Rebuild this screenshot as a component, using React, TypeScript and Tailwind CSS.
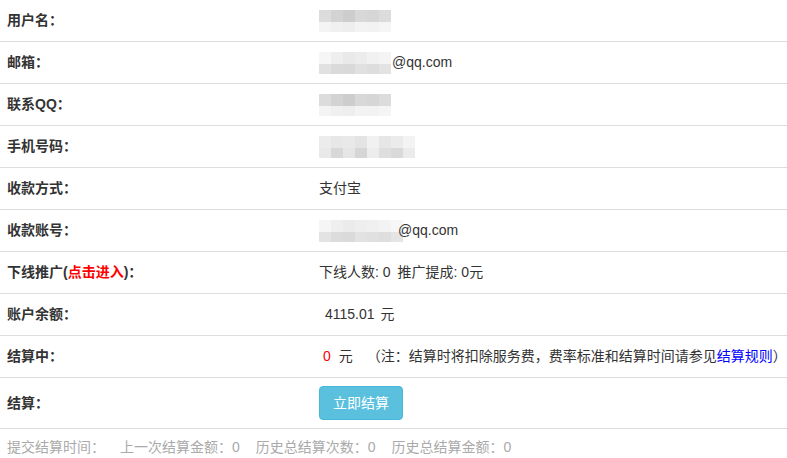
import React from 'react';

const font = { fontFamily: '"Liberation Sans", "Noto Sans CJK SC", sans-serif' };

// blurred placeholder: two rows of pixel cells
function Blur({ top, bottom, cell = 12 }: { top: string[]; bottom: string[]; cell?: number }) {
    return (
        <span className="inline-flex flex-col align-middle">
            <span className="flex h-[12px]">
                {top.map((c, i) => (
                    <span key={i} className="h-full" style={{ width: cell, background: c }} />
                ))}
            </span>
            <span className="flex h-[10px]">
                {bottom.map((c, i) => (
                    <span key={i} className="h-full" style={{ width: cell, background: c }} />
                ))}
            </span>
        </span>
    );
}

const nameTop = ['#dcdcdc', '#d3d3d3', '#cdcdcd', '#d8d8d8', '#d6d6d6', '#dcdcdc'];
const nameBottom = ['#f4f4f4', '#f0f0f0', '#eeeeee', '#f3f3f3', '#f2f2f2', '#f5f5f5'];
const mailTop = ['#f6f6f6', '#eeeeee', '#e9e9e9', '#ececec', '#f1f1f1', '#f4f4f4'];
const mailBottom = ['#e1e1e1', '#dadada', '#d9d9d9', '#e0e0e0', '#dddddd', '#e3e3e3'];
const phoneTop = ['#ececec', '#e7e7e7', '#e9e9e9', '#e4e4e4', '#f1f1f1', '#e6e6e6', '#ebebeb', '#f3f3f3'];
const phoneBottom = ['#e9e9e9', '#d8d8d8', '#e6e6e6', '#d6d6d6', '#ededed', '#dedede', '#d9d9d9', '#ebebeb'];
const acctTop = ['#f5f5f5', '#efefef', '#ebebeb', '#eeeeee', '#f0f0f0', '#f3f3f3', '#f7f7f7'];
const acctBottom = ['#e3e3e3', '#dcdcdc', '#dadada', '#e2e2e2', '#e0e0e0', '#dedede', '#e5e5e5'];

function Row({ label, children, tall }: { label: React.ReactNode; children: React.ReactNode; tall?: boolean }) {
    return (
        <div className={`flex items-center border-b border-[#dddddd] ${tall ? 'h-[51px]' : 'h-[42px]'}`}>
            <div className="w-[319px] pl-[7px] font-bold text-[14px] text-[#333333]">{label}</div>
            <div className="flex-1 flex items-center text-[14px] text-[#333333]">{children}</div>
        </div>
    );
}

export default function App() {
    return (
        <div className="w-[787px] h-[458px] bg-white overflow-hidden" style={font}>
            <Row label="用户名：">
                <Blur top={nameTop} bottom={nameBottom} />
            </Row>
            <Row label="邮箱：">
                <Blur top={mailTop} bottom={mailBottom} />
                <span className="ml-[1px]">@qq.com</span>
            </Row>
            <Row label="联系QQ：">
                <Blur top={nameTop} bottom={nameBottom} />
            </Row>
            <Row label="手机号码：">
                <Blur top={phoneTop} bottom={phoneBottom} />
            </Row>
            <Row label="收款方式：">支付宝</Row>
            <Row label="收款账号：">
                <Blur top={acctTop} bottom={acctBottom} />
                <span className="ml-[-5px]">@qq.com</span>
            </Row>
            <Row
                label={
                    <span>
                        下线推广(<span className="text-[#ff0000]">点击进入</span>)：
                    </span>
                }
            >
                <span>下线人数: 0</span>
                <span className="ml-[7px]">推广提成: 0元</span>
            </Row>
            <Row label="账户余额：">
                <span className="ml-[6px]">4115.01</span>
                <span className="ml-[6px]">元</span>
            </Row>
            <Row label="结算中：">
                <span className="ml-[4px] text-[#ff0000]">0</span>
                <span className="ml-[8px]">元</span>
                <span className="ml-[14px]">
                    （注：结算时将扣除服务费，费率标准和结算时间请参见
                    <a href="#" className="text-[#0000ff]">结算规则</a>）
                </span>
            </Row>
            <Row label="结算：" tall>
                <button className="h-[34px] px-[13px] rounded-[4px] bg-[#5bc0de] border border-[#46b8da] text-white text-[14px]">
                    立即结算
                </button>
            </Row>
            <div className="flex items-center h-[37px] pl-[7px] text-[14px] text-[#aaaaaa]">
                <span>提交结算时间：</span>
                <span className="ml-[15px]">上一次结算金额：0</span>
                <span className="ml-[16px]">历史总结算次数：0</span>
                <span className="ml-[16px]">历史总结算金额：0</span>
            </div>
        </div>
    );
}
